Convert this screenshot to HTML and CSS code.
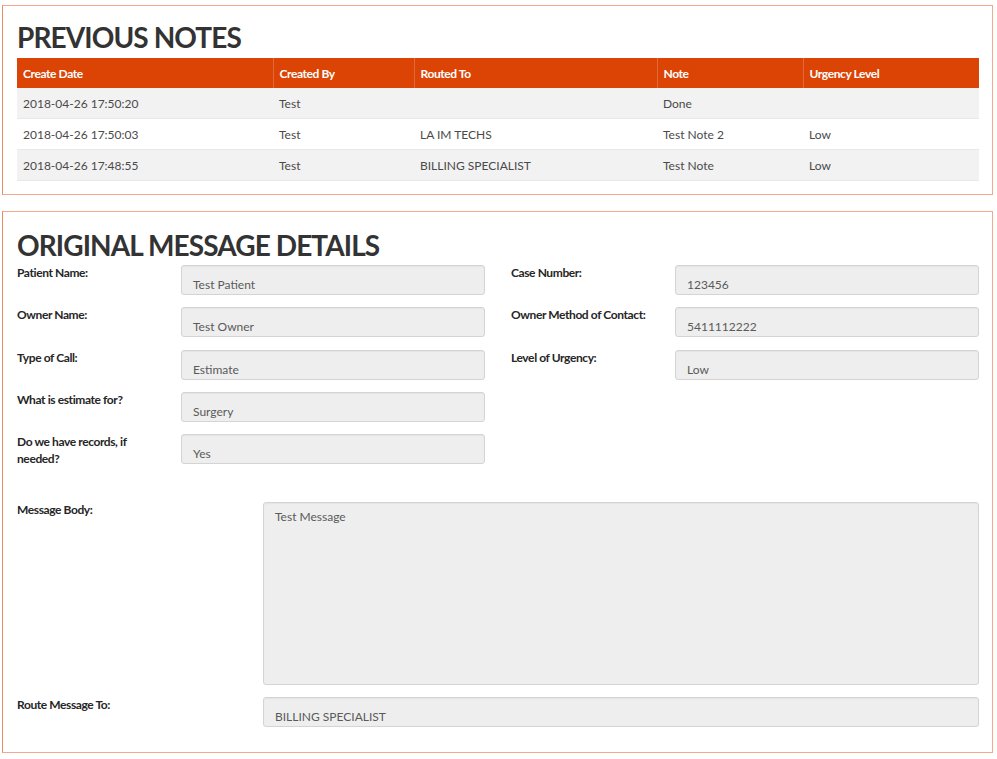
FILE: index.html
```html
<!DOCTYPE html>
<html>
<head>
<meta charset="utf-8">
<link rel="stylesheet" href="styles.css">
</head>
<body>
<div class="panel notes">
  <h1 class="title">PREVIOUS NOTES</h1>
  <table class="grid">
    <colgroup>
      <col class="c1"><col class="c2"><col class="c3"><col class="c4"><col class="c5">
    </colgroup>
    <thead>
      <tr><th>Create Date</th><th>Created By</th><th>Routed To</th><th>Note</th><th>Urgency Level</th></tr>
    </thead>
    <tbody>
      <tr><td>2018-04-26 17:50:20</td><td>Test</td><td></td><td>Done</td><td></td></tr>
      <tr><td>2018-04-26 17:50:03</td><td>Test</td><td>LA IM TECHS</td><td>Test Note 2</td><td>Low</td></tr>
      <tr><td>2018-04-26 17:48:55</td><td>Test</td><td>BILLING SPECIALIST</td><td>Test Note</td><td>Low</td></tr>
    </tbody>
  </table>
</div>

<div class="panel details">
  <h1 class="title">ORIGINAL MESSAGE DETAILS</h1>
  <div class="fields">
    <div class="col">
      <div class="field"><label class="lbl">Patient Name:</label><div class="input">Test Patient</div></div>
      <div class="field"><label class="lbl">Owner Name:</label><div class="input">Test Owner</div></div>
      <div class="field"><label class="lbl">Type of Call:</label><div class="input">Estimate</div></div>
      <div class="field"><label class="lbl">What is estimate for?</label><div class="input">Surgery</div></div>
      <div class="field"><label class="lbl">Do we have records, if needed?</label><div class="input">Yes</div></div>
    </div>
    <div class="col">
      <div class="field"><label class="lbl">Case Number:</label><div class="input">123456</div></div>
      <div class="field"><label class="lbl">Owner Method of Contact:</label><div class="input">5411112222</div></div>
      <div class="field"><label class="lbl">Level of Urgency:</label><div class="input">Low</div></div>
    </div>
  </div>
  <div class="wide body-row"><label class="lbl">Message Body:</label><div class="textarea">Test Message</div></div>
  <div class="wide route-row"><label class="lbl">Route Message To:</label><div class="input">BILLING SPECIALIST</div></div>
</div>
</body>
</html>
```

FILE: styles.css
```css
html, body {
  margin: 0;
  padding: 0;
  background: #ffffff;
}
body {
  padding: 5px 4px 0 2px;
  font-family: Lato, "Open Sans", sans-serif;
  color: #444;
}
.panel {
  border: 1px solid #f3a98b;
  border-left-color: #ec8a62;
  padding: 13px 13px 13px 14px;
  background: #fff;
}
.details {
  margin-top: 16px;
  padding-top: 15px;
  padding-bottom: 25px;
}
.title {
  margin: 0;
  font-size: 28px;
  line-height: 36px;
  font-weight: 700;
  color: #333;
  letter-spacing: -0.9px;
}
.grid {
  margin-top: 3px;
  width: 100%;
  border-collapse: collapse;
  table-layout: fixed;
  font-size: 12px;
}
.c1 { width: 256px; }
.c2 { width: 141px; }
.c3 { width: 243px; }
.c4 { width: 146px; }
.grid th {
  background: #dc4405;
  color: #fff;
  font-weight: 700;
  text-align: left;
  height: 30px;
  padding: 0 6px;
  border-left: 1px solid #e3683a;
  letter-spacing: -0.4px;
}
.grid th:first-child { border-left: none; }
.grid td {
  height: 30px;
  padding: 0 6px;
  color: #4a4a4a;
  border-bottom: 1px solid #e8e8e8;
}
.grid tbody tr:nth-child(odd) td { background: #f2f2f2; }

.fields {
  display: grid;
  grid-template-columns: 1fr 1fr;
  column-gap: 26px;
  margin-top: 2px;
}
.col {
  display: flex;
  flex-direction: column;
  gap: 12.3px;
}
.field {
  display: grid;
  grid-template-columns: 164px 1fr;
  height: 30px;
}
.lbl {
  font-size: 12px;
  font-weight: 700;
  color: #262626;
  line-height: 17px;
  letter-spacing: -0.4px;
  max-width: 148px;
  margin-top: -1px;
}
.input, .textarea {
  background: #eeeeee;
  border: 1px solid #d4d4d4;
  border-radius: 3px;
  box-shadow: inset 0 1px 1px rgba(0,0,0,0.04);
  font-size: 12px;
  color: #5a5a5a;
  box-sizing: border-box;
}
.input {
  height: 30px;
  padding: 11px 11px 0 11px;
  line-height: 15px;
}
.wide {
  display: grid;
  grid-template-columns: 246px 1fr;
}
.wide .lbl { max-width: none; }
.body-row { margin-top: 38px; }
.textarea {
  height: 183px;
  padding: 6px 11px;
  line-height: 15px;
}
.route-row { margin-top: 12px; }
```
